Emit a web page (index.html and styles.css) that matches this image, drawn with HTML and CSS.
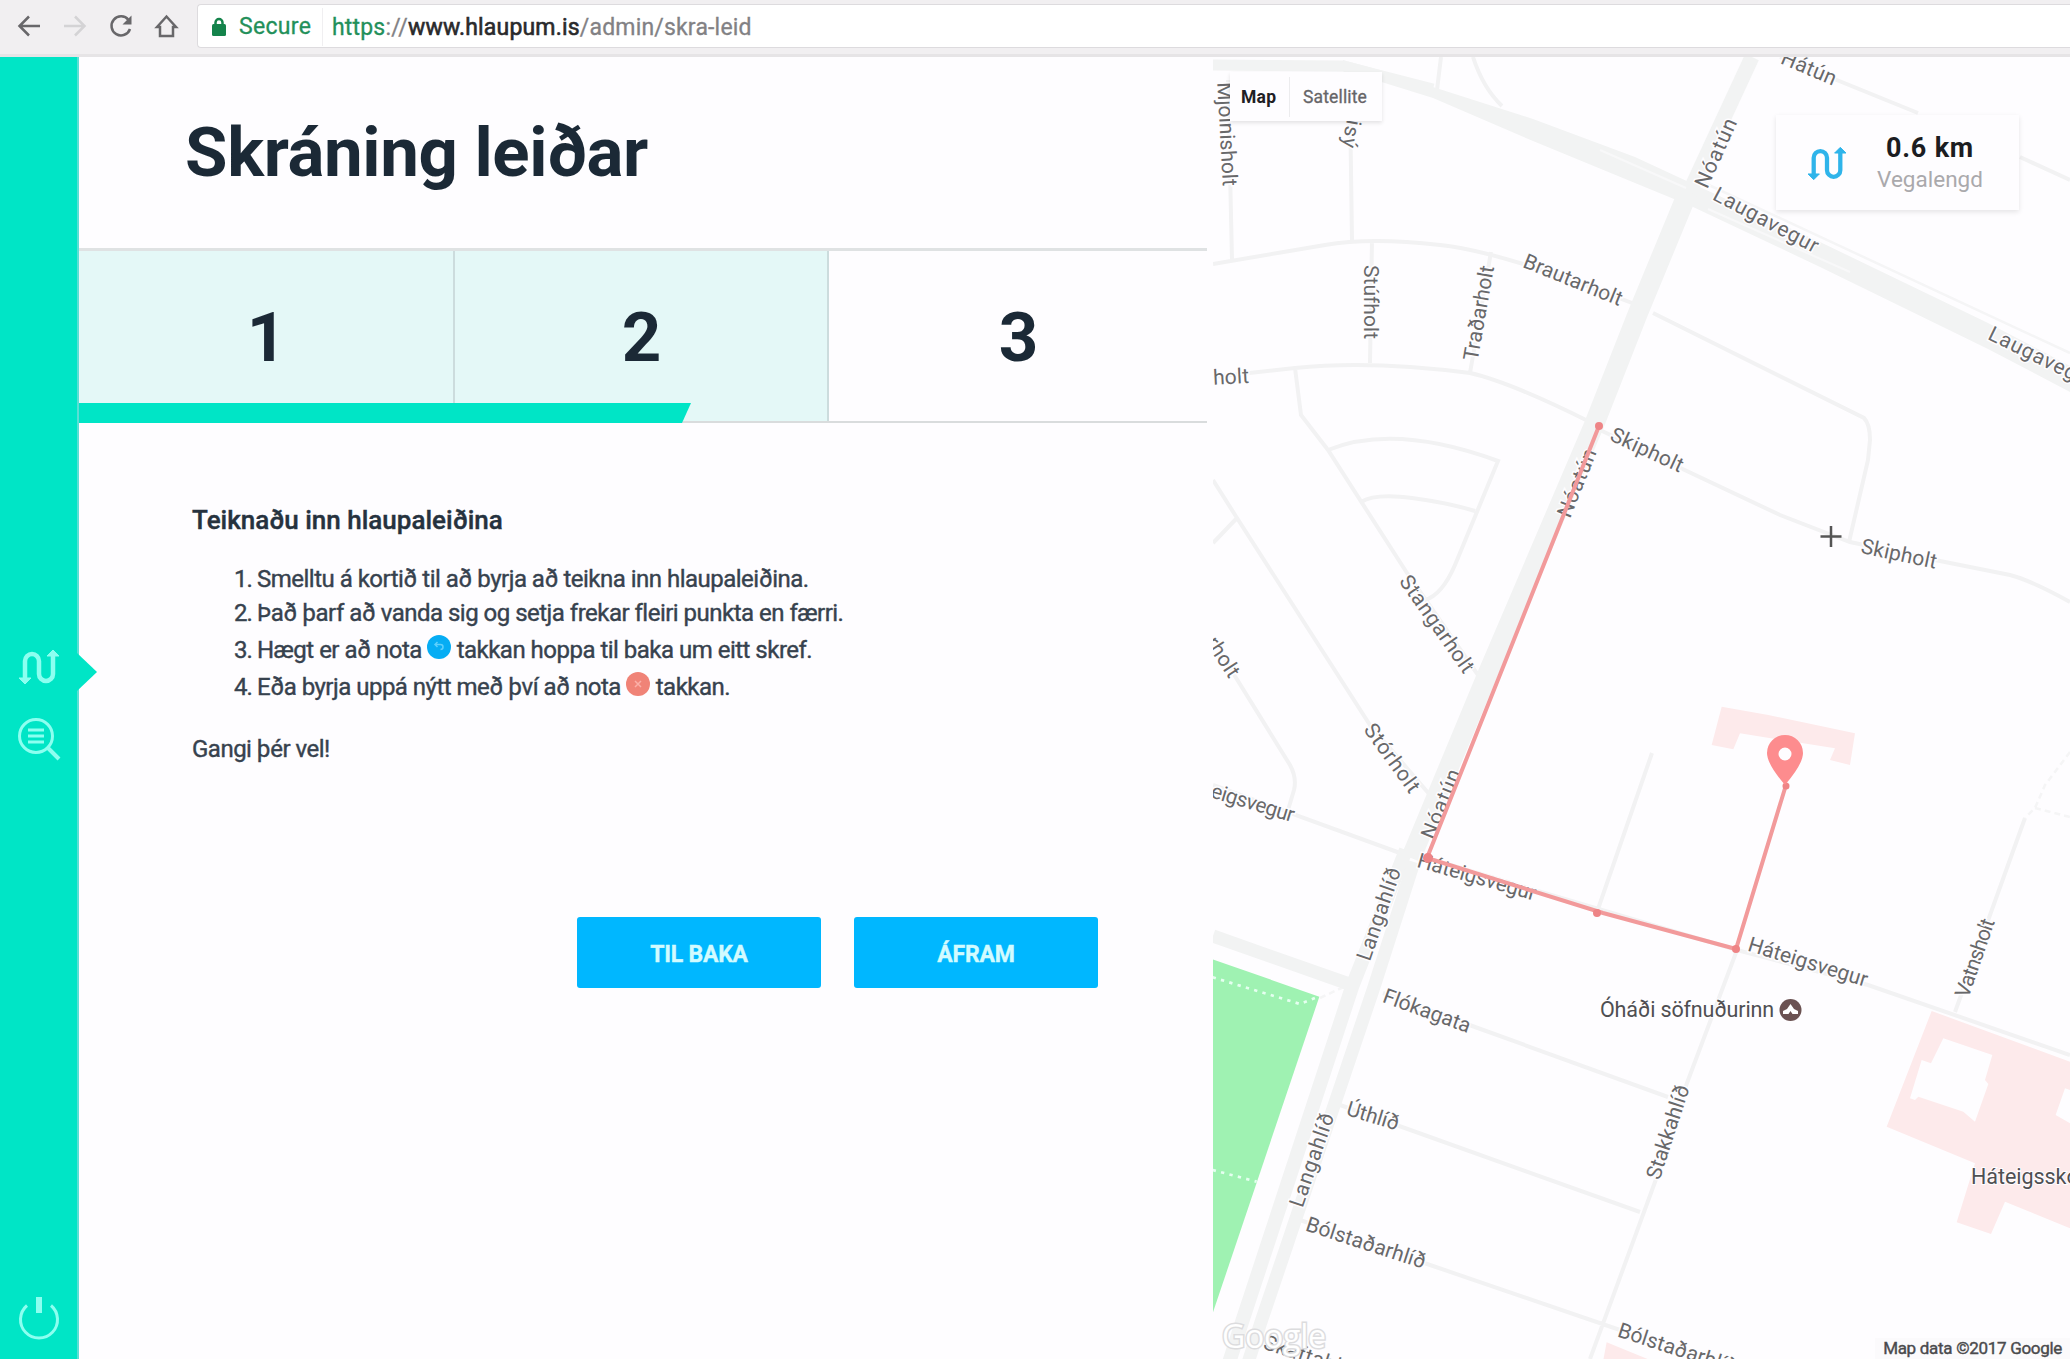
FILE: index.html
```html
<!DOCTYPE html>
<html lang="is">
<head>
<meta charset="utf-8">
<title>Skráning leiðar</title>
<link rel="stylesheet" href="styles.css">
</head>
<body>
<svg class="defs" width="0" height="0" aria-hidden="true">
  <symbol id="route" viewBox="0 0 40 36">
    <path d="M6 29V12a7 7 0 0 1 14 0v13a7 7 0 0 0 14 0V7" fill="none" stroke="currentColor" stroke-width="4.500"/>
    <path d="M0 29h12l-6 6zM28 7h12l-6-6z" fill="currentColor" stroke="currentColor" stroke-linejoin="round"/>
  </symbol>
</svg>
<header class="toolbar">
  <nav class="nav">
    <svg width="26" height="26" viewBox="0 0 26 26"><path d="M24 13H4M13 3.500L3.500 13l9.500 9.500"/></svg>
    <svg class="off" width="26" height="26" viewBox="0 0 26 26"><path d="M2 13h20M13 3.500l9.500 9.500L13 22.500"/></svg>
    <svg width="26" height="26" viewBox="0 0 26 26"><path d="M22 16a9.500 9.500 0 1 1-1.500-9"/><path d="M23.500 2.500v9h-9z" class="solid"/></svg>
    <svg width="26" height="26" viewBox="0 0 26 26"><path d="M3 14L12.500 3.500 22 14h-3v9H6v-9z"/></svg>
  </nav>
  <div class="address">
    <svg width="16" height="20" viewBox="0 0 16 20"><path d="M4.500 9V5.500a3.500 3.500 0 0 1 7 0V9" fill="none" stroke="#14834b" stroke-width="2.500"/><rect x="1" y="7" width="14" height="12" rx="1.500" fill="#14834b"/></svg>
    <span class="secure">Secure</span>
    <span class="url"><span class="scheme">https</span>://<b>www.hlaupum.is</b>/admin/skra-leid</span>
  </div>
</header>
<div class="app">
  <aside class="sidebar">
    <a class="side-link active"><svg width="40" height="36"><use href="#route"/></svg></a>
    <a class="side-link"><svg width="44" height="44" viewBox="0 0 44 44" fill="none" stroke="currentColor" stroke-width="3"><circle cx="19" cy="19" r="16.500"/><path d="M31 31l11 11" stroke-width="4"/><path d="M11 13h16M11 19h16M11 25h16"/></svg></a>
    <a class="side-link power"><svg width="44" height="44" viewBox="0 0 44 44" fill="none" stroke="currentColor" stroke-width="3"><path d="M10 9.500a18.500 18.500 0 1 0 24 0"/><path d="M22 1v16" stroke-width="6"/></svg></a>
  </aside>
  <main class="panel">
    <h1>Skráning leiðar</h1>
    <div class="steps">
      <div class="step done">1</div>
      <div class="step done">2</div>
      <div class="step">3</div>
      <div class="progress"></div>
    </div>
    <section class="content">
      <h2>Teiknaðu inn hlaupaleiðina</h2>
      <ol>
        <li><i>1.</i><span>Smelltu á kortið til að byrja að teikna inn hlaupaleiðina.</span></li>
        <li><i>2.</i><span>Það þarf að vanda sig og setja frekar fleiri punkta en færri.</span></li>
        <li><i>3.</i><span>Hægt er að nota <svg class="dot" width="24" height="24" viewBox="0 0 24 24"><circle cx="12" cy="12" r="12" fill="#06adf4"/><path d="M8.500 9.500h5a2.500 2.500 0 0 1 0 5M10.500 7L8 9.500l2.500 2.500" fill="none" stroke="#5fd0fc" stroke-width="1.500"/></svg> takkan hoppa til baka um eitt skref.</span></li>
        <li><i>4.</i><span>Eða byrja uppá nýtt með því að nota <svg class="dot" width="24" height="24" viewBox="0 0 24 24"><circle cx="12" cy="12" r="12" fill="#f08377"/><path d="M9 9l6 6M15 9l-6 6" fill="none" stroke="#fbb0a8" stroke-width="1.500"/></svg> takkan.</span></li>
      </ol>
      <p>Gangi þér vel!</p>
      <div class="actions"><button>TIL BAKA</button><button>ÁFRAM</button></div>
    </section>
  </main>
  <section class="map">
    <svg class="canvas" width="857" height="1302" viewBox="1213 57 857 1302">
      <g transform="translate(1635 420) scale(.33333)" class="building"><path d="M260 860L400 885L660 940L645 1035L585 1020L600 985L315 940L295 988L230 975z"/></g>
      <g transform="translate(1635 880) scale(.33333)" class="building"><path fill-rule="evenodd" d="M890 393L1305 545V1045L1110 965L1068 1062L965 1027L1020 850L755 740zM925 475L1072 525L1050 600L1060 612L1020 725L985 695L850 650L840 660L825 655L860 540L888 550zM1290 625L1305 630V730L1262 705z"/><path d="M-85 1387L45 1440H-95z"/></g>
      <g transform="translate(1200 880) scale(.33333)"><path d="M38 238L358 350L38 1300z" fill="#9ff2b2"/><path d="M38 292L300 372L355 350M38 870L170 905" class="trail"/></g>
      <g class="minor">
        <path d="M1441 57L1437 90M1473 57Q1483 88 1502 106M1228 80L1232 260M1350 100L1352 241M1213 264L1325 245Q1370 237 1440 245Q1500 251 1632 303M1372 240L1370 363M1491 252L1470 373M1213 377L1295 368Q1370 360 1470 373Q1510 382 1590 422M1295 368L1301 415L1328 450L1407 573L1478 675M1328 450Q1395 423 1498 461L1455 565Q1442 595 1425 600M1361 502Q1375 493 1412 498T1475 511M1213 480L1237 518L1370 725L1430 795M1213 543L1237 518M1225 660L1290 765Q1297 778 1294 790L1288 810M1213 785L1400 853M1652 753L1597 912M1653 313L1864 418Q1870 424 1870 440L1868 460L1849 542M1600 430L1780 515L1850 542L1935 560L2010 575Q2030 580 2070 602M1780 57L1918 113M2020 157L2070 180M2025 818L1955 1012M1427 858L1737 950L1868 985L2070 1055M1737 950L1687 1083L1655 1182L1590 1359M1383 993L1475 1027L1668 1097M1340 1105L1402 1127L1640 1212M1300 1220L1430 1265L1620 1330"/>
        <path class="faint" d="M1698 180L2070 353"/>
        <path class="faint" stroke-dasharray="6 4" d="M2070 752L2045 785L2035 808L2025 818M2035 808L2070 817M1320 998L1350 984"/>
      </g>
      <g class="major">
        <path stroke-width="11" d="M1213 65L1343 66L1433 89"/>
        <path class="fill" d="M1343 60L1383 71L1533 119L1635 157L1691 183L1818 241L1988 323L2070 366V392L1988 349L1818 266L1691 206L1635 183L1533 141L1433 98L1343 70z"/>
        <path stroke-width="15" d="M1752 57L1689 193"/>
        <path stroke-width="20" d="M1688 192L1638 313L1594 425L1488 673L1411 858"/>
        <path stroke-width="14" d="M1406 850L1352 987L1242 1322L1228 1366"/>
        <path stroke-width="13" d="M1414 862L1374 987L1261 1322L1247 1366"/>
        <path stroke-width="13" d="M1213 936L1352 985"/>
      </g>
      <path d="M1600 150L1686 188M1708 209L1850 272" stroke="#f8f8f9" stroke-width="2"/>
      <g class="labels">
        <text transform="translate(1227 134) rotate(87)" textLength="104" dy=".33em">Mjölnisholt</text>
        <text transform="translate(1352 130) rotate(100)" textLength="36" dy=".33em">risý</text>
        <text transform="translate(1371 302) rotate(90)" textLength="74" dy=".33em">Stúfholt</text>
        <text transform="translate(1479 313) rotate(-80)" textLength="96" dy=".33em">Traðarholt</text>
        <text transform="translate(1573 280) rotate(22)" textLength="105" dy=".33em">Brautarholt</text>
        <text transform="translate(1231 377) rotate(-3)" textLength="36" dy=".33em">holt</text>
        <text transform="translate(1716 153) rotate(-66)" textLength="74" dy=".33em">Nóatún</text>
        <text transform="translate(1809 68) rotate(23)" textLength="58" dy=".33em">Hátún</text>
        <text transform="translate(1766 220) rotate(28)" textLength="116" dy=".33em">Laugavegur</text>
        <text transform="translate(2042 358) rotate(26)" textLength="116" dy=".33em">Laugavegur</text>
        <text transform="translate(1647 450) rotate(25)" textLength="78" dy=".33em">Skipholt</text>
        <text transform="translate(1899 554) rotate(12)" textLength="77" dy=".33em">Skipholt</text>
        <text transform="translate(1577 483) rotate(-68)" textLength="72" dy=".33em">Nóatún</text>
        <text transform="translate(1441 804) rotate(-68)" textLength="73" dy=".33em">Nóatún</text>
        <text transform="translate(1437 624) rotate(55)" textLength="114" dy=".33em">Stangarholt</text>
        <text transform="translate(1392 758) rotate(54)" textLength="80" dy=".33em">Stórholt</text>
        <text transform="translate(1223 657) rotate(57)" textLength="44" dy=".33em">rholt</text>
        <text transform="translate(1253 803) rotate(17)" textLength="86" dy=".33em">eigsvegur</text>
        <text transform="translate(1379 914) rotate(-71)" textLength="97" dy=".33em">Langahlíð</text>
        <text transform="translate(1477 877) rotate(16)" textLength="123" dy=".33em">Háteigsvegur</text>
        <text transform="translate(1808 962) rotate(17)" textLength="124" dy=".33em">Háteigsvegur</text>
        <text transform="translate(1975 958) rotate(-71)" textLength="82" dy=".33em">Vatnsholt</text>
        <text transform="translate(1427 1011) rotate(20)" textLength="92" dy=".33em">Flókagata</text>
        <text transform="translate(1373 1116) rotate(17)" textLength="54" dy=".33em">Úthlíð</text>
        <text transform="translate(1312 1160) rotate(-71)" textLength="98" dy=".33em">Langahlíð</text>
        <text transform="translate(1366 1243) rotate(18)" textLength="125" dy=".33em">Bólstaðarhlíð</text>
        <text transform="translate(1668 1132) rotate(-72)" textLength="98" dy=".33em">Stakkahlíð</text>
        <text transform="translate(1678 1349) rotate(18)" textLength="125" dy=".33em">Bólstaðarhlíð</text>
        <text transform="translate(1311 1357) rotate(18)" textLength="98" dy=".33em">Skaftahlíð</text>
      </g>
      <g class="places">
        <text x="1600" y="1017" textLength="174">Óháði söfnuðurinn</text>
        <text x="1971" y="1184" textLength="118">Háteigsskóli</text>
      </g>
      <circle cx="1790.500" cy="1010" r="11" fill="#6b5252"/>
      <path d="M1783 1014v-3l4-2 3.500-5 3.500 5 4 2v3h-5.500l-2-3-2 3z" fill="#fff"/>
      <text class="google" x="1222" y="1348" textLength="104">Google</text>
      <g class="trackline">
        <path d="M1599 426L1427 858L1603 913L1736 949L1786 785"/>
        <circle cx="1599" cy="426" r="4"/><circle cx="1428" cy="858" r="5"/><circle cx="1597" cy="913" r="4"/><circle cx="1736" cy="949" r="4"/><circle cx="1786" cy="786" r="3.500"/>
      </g>
      <path fill-rule="evenodd" fill="#fd8c8e" d="M1785 785Q1767 764 1767 753A18 18 0 0 1 1803 753Q1803 764 1785 785zM1791.500 754a6.500 6.500 0 1 0-13 0a6.500 6.500 0 1 0 13 0z"/>
      <path d="M1820.500 536.500h21M1831 526v21" stroke="#555" stroke-width="2.500"/>
    </svg>
    <div class="map-type"><b>Map</b><span>Satellite</span></div>
    <div class="distance">
      <svg width="38" height="35"><use href="#route"/></svg>
      <div><strong>0.6 km</strong><span>Vegalengd</span></div>
    </div>
    <div class="credit">Map data ©2017 Google</div>
  </section>
</div>
</body>
</html>
```
FILE: styles.css
```css
* { box-sizing: border-box; }
body {
  margin: 0;
  width: 2070px;
  height: 1359px;
  overflow: hidden;
  display: flex;
  flex-direction: column;
  background: #fefdff;
  color: #1b2936;
  font-family: Roboto, "Liberation Sans", sans-serif;
}
.defs { position: absolute; }

.toolbar {
  height: 57px;
  flex: none;
  display: flex;
  align-items: flex-start;
  background: #f1eff1;
  border-bottom: 3px solid #e6e4e6;
}
.nav { width: 197px; padding: 13px 0 0 16px; display: flex; gap: 20px; }
.nav svg { fill: none; stroke: #68676a; stroke-width: 2.5; }
.nav .off { stroke: #d4d3d5; }
.nav .solid { fill: #68676a; stroke: none; }
.address {
  flex: 1;
  height: 44px;
  margin-top: 4px;
  padding: 2px 0 0 13px;
  display: flex;
  align-items: center;
  background: #fff;
  border: 1px solid #dddbde;
  border-right: 0;
  border-radius: 4px 0 0 4px;
  font-size: 23px;
}
.secure {
  width: 84px;
  height: 38px;
  line-height: 38px;
  margin: 0 9px 0 12px;
  color: #23905a;
  border-right: 1px solid #f0eff1;
  letter-spacing: .3px;
  -webkit-text-stroke: .3px;
}
.url { color: #828184; letter-spacing: .18px; -webkit-text-stroke: .3px; }
.url .scheme { color: #23905a; }
.url b { font-weight: 400; color: #2a2a2c; -webkit-text-stroke: .6px #2a2a2c; }

.app { flex: 1; min-height: 0; display: flex; }
.sidebar {
  position: relative;
  width: 79px;
  flex: none;
  display: flex;
  flex-direction: column;
  align-items: center;
  padding-top: 592px;
  background: #00e5c6;
  border-right: 2px solid #5bdfd5;
  color: #8cfff0;
}
.side-link { display: flex; }
.side-link + .side-link { margin-top: 32px; }
.side-link + .side-link.power { margin: auto 0 19px; }
.active::after {
  content: "";
  position: absolute;
  left: 77px;
  top: 596px;
  width: 20px;
  height: 38px;
  background: #00e5c6;
  clip-path: polygon(0 0, 100% 50%, 0 100%);
}

.panel { width: 1128px; flex: none; }
h1 { margin: 0; height: 191px; padding: 48px 0 0 106px; font-size: 69px; line-height: 96px; font-weight: 700; letter-spacing: -.35px; }
.steps {
  position: relative;
  height: 175px;
  display: grid;
  grid-template-columns: 376px 374px 1fr;
  border-top: 3px solid #dfe2e3;
  border-bottom: 2px solid #d9dcdd;
}
.step {
  padding: 39px 0 0 1px;
  text-align: center;
  font-size: 69px;
  line-height: 96px;
  font-weight: 700;
}
.step.done { background: #e4f8f7; border-right: 2px solid #ccdcdd; }
.progress {
  position: absolute;
  left: 0;
  bottom: -2px;
  width: 612px;
  height: 20px;
  background: #00e5c6;
  clip-path: polygon(0 0, 100% 0, calc(100% - 9px) 100%, 0 100%);
}
.content { padding: 77px 109px 0 113px; font-size: 24px; letter-spacing: -.51px; color: #37424e; -webkit-text-stroke: .4px; }
h2 { margin: 0; font-size: 26px; line-height: 40px; font-weight: 500; color: #26323e; letter-spacing: 0; }
ol { margin: 22px 0 0; padding: 0 0 0 42px; list-style: none; }
li { height: 37px; display: flex; line-height: 34px; white-space: nowrap; }
li:first-child { height: 34px; }
li i { width: 23px; font-style: normal; letter-spacing: -1px; }
.dot { vertical-align: -1px; }
p { margin: 25px 0 0; line-height: 34px; }
.actions { display: flex; justify-content: flex-end; gap: 33px; margin-top: 151px; }
button {
  width: 244px;
  height: 71px;
  padding: 3px 0 0;
  border: 0;
  border-radius: 3px;
  background: #00b7ff;
  color: #d2fbff;
  font: 700 23px Roboto, "Liberation Sans", sans-serif;
  letter-spacing: -.2px;
}

.map { position: relative; flex: 1; margin-left: 6px; }
.canvas { display: block; }
.building { fill: #fdeaeb; }
.trail { fill: none; stroke: #e5fff0; stroke-width: 8; stroke-dasharray: 10 16; }
.minor { fill: none; stroke: #f2f2f3; stroke-width: 4; }
.minor .faint { stroke: #f5f5f6; stroke-width: 2.5; }
.major { fill: none; stroke: #f2f3f3; }
.major .fill { fill: #f2f3f3; stroke: none; }
.labels { font-size: 21px; fill: #68686a; text-anchor: middle; paint-order: stroke; stroke: #fefdff; stroke-width: 3px; }
.places { font-size: 21.5px; fill: #4f4f52; paint-order: stroke; stroke: #fefdff; stroke-width: 2px; }
.google { font: 500 32px "Open Sans", sans-serif; fill: #fff; stroke: #dcdcde; stroke-width: 3px; paint-order: stroke; }
.trackline { fill: #ee8486; }
.trackline path { fill: none; stroke: #f29a9b; stroke-width: 4; }
.map-type {
  position: absolute;
  left: 17px;
  top: 15px;
  width: 152px;
  height: 49px;
  display: flex;
  align-items: center;
  background: #fefdff;
  box-shadow: 0 2px 4px rgba(0, 0, 0, .11);
  font-size: 17.5px;
}
.map-type b { width: 60px; line-height: 40px; padding-left: 11px; color: #202024; border-right: 1px solid #ececee; letter-spacing: .3px; }
.map-type span { padding-left: 13px; color: #666568; -webkit-text-stroke: .3px; letter-spacing: .15px; }
.distance {
  position: absolute;
  left: 563px;
  top: 58px;
  width: 243px;
  height: 95px;
  padding: 0 0 0 32px;
  display: flex;
  align-items: center;
  background: #fefdff;
  box-shadow: 0 2px 5px rgba(0, 0, 0, .1);
}
.distance svg { color: #2fb4ea; margin-top: 1px; }
.distance div { display: flex; flex-direction: column; align-items: center; width: 168px; }
.distance strong { font-size: 27px; line-height: 32px; color: #1c1d22; letter-spacing: .8px; }
.distance span { font-size: 22.5px; line-height: 30px; color: #aaa9ac; letter-spacing: 0; }
.credit {
  position: absolute;
  right: 0;
  bottom: 0;
  height: 21px;
  line-height: 21px;
  padding: 0 8px;
  background: #fbfafc;
  color: #4a4a4d;
  font-size: 17px;
  letter-spacing: -.3px;
  -webkit-text-stroke: .4px;
}
```
